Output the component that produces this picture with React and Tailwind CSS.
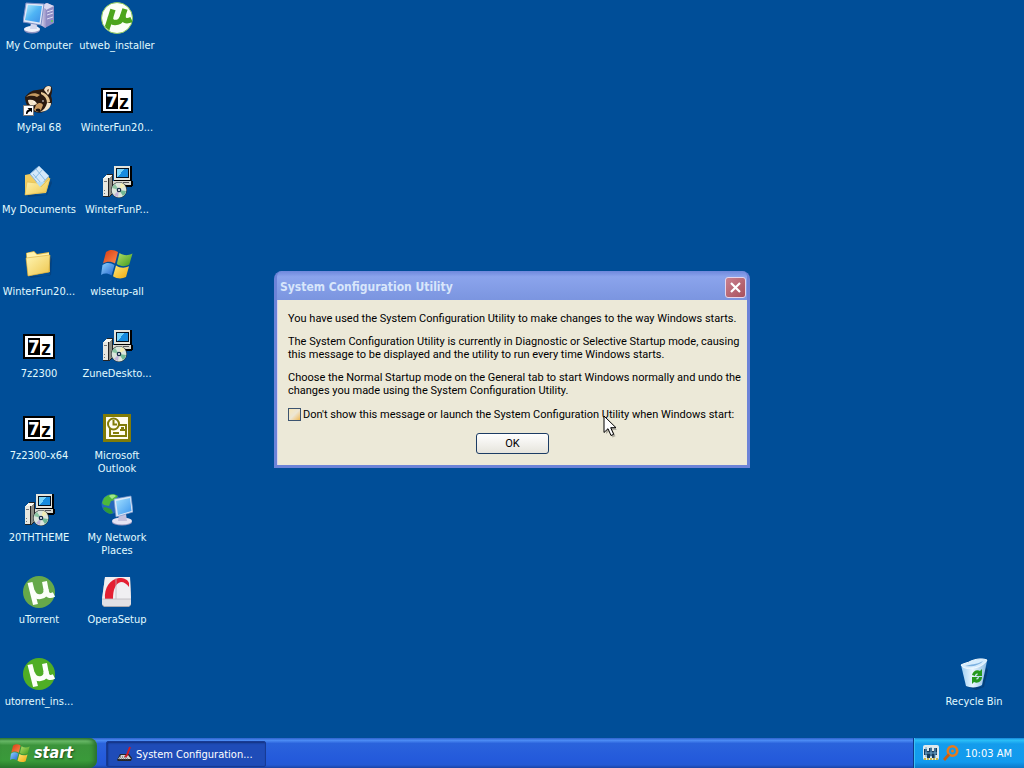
import React from 'react';

function Icon({ children, size = 32 }) {
  return (
    <svg width={size} height={size} viewBox="0 0 32 32" aria-hidden="true" className="shrink-0">
      {children}
    </svg>
  );
}

function ComputerIcon() {
  return (
    <Icon>
      <defs>
        <linearGradient id="pcScreen" x1="0" y1="0" x2="1" y2="1">
          <stop offset="0" stopColor="#a9ecff" />
          <stop offset="0.5" stopColor="#4fb4f4" />
          <stop offset="1" stopColor="#3c8ee6" />
        </linearGradient>
        <linearGradient id="pcCase" x1="0" y1="0" x2="1" y2="0">
          <stop offset="0" stopColor="#f3f1fb" />
          <stop offset="1" stopColor="#9a94c8" />
        </linearGradient>
      </defs>
      <path d="M16 4 24 1l7 3v17l-9 5-6-4z" fill="#8f8cc4" />
      <path d="M16 4 24 1l7 3-8 4z" fill="#d9d8f0" />
      <path d="M16 4l7 3v19l-7-4z" fill="url(#pcCase)" />
      <path d="M24 10l6-2M24 13l6-2M24 17l6-2" stroke="#dcdcf4" />
      <circle cx="29" cy="19" r="1" fill="#5cd04a" />
      <path d="M8 22l6 1 1 4H7z" fill="#aeb4d8" />
      <ellipse cx="9" cy="28" rx="8" ry="3.4" fill="#8f93c0" />
      <ellipse cx="9" cy="27" rx="8" ry="3" fill="#eef0fa" />
      <path d="M8 21h5l1 6H7z" fill="#d4d8ee" />
      <path d="M3 1l18 1-3 21L0 20z" fill="#dfe7f7" stroke="#7f90c6" />
      <path d="M5 3l14 1-2.500 16.500L2 18z" fill="url(#pcScreen)" />
    </Icon>
  );
}

function TorrentWhiteIcon() {
  return (
    <Icon>
      <circle cx="16" cy="16" r="15.500" fill="#fbfff6" stroke="#8cc65c" />
      <g fill="none" stroke="#4ca51c" strokeWidth="5.400">
        <path d="M12 7.500L6.500 25" />
        <path d="M9.500 15c-1 7.500 9 7 11.500 1L24 7" />
        <path d="M22 13c-.5 5.500 3 7 8.500 4.500" />
      </g>
      <path d="M4.500 23l5 0-1 5.500-4-3z" fill="#4ca51c" />
    </Icon>
  );
}

function TorrentGreenIcon({ pale }) {
  return (
    <Icon>
      <circle cx="16" cy="16" r="16" fill={pale ? '#66a94a' : '#4fae26'} />
      <g fill="none" stroke="#fcfffa" strokeWidth="5">
        <path d="M7 6.500L12.500 28.500" />
        <path d="M9.500 15C12 23.500 24 22 23 13.500L21.500 5.500" />
        <path d="M23 13.500C24 20 27 20.500 31 18.500" />
      </g>
    </Icon>
  );
}

function SevenZipIcon() {
  return (
    <Icon>
      <rect x="0" y="4" width="32" height="25" fill="#000" />
      <rect x="2" y="6" width="28" height="21" fill="#fff" />
      <rect x="5" y="8" width="12" height="17" fill="#000" />
      <text x="5" y="23" fontSize="17" fontWeight="700" fill="#fff" fontFamily="DejaVu Sans, sans-serif">7</text>
      <text x="18" y="25" fontSize="20" fontWeight="700" fill="#000" fontFamily="Liberation Sans, sans-serif">z</text>
    </Icon>
  );
}

function RaccoonIcon() {
  return (
    <Icon>
      <path d="M2 13c3-4 7-7 12-7 2 0 4-1 6-1 2-3 5-4 8-3 2 3 1 7 0 10 2 5 1 9-2 12-4 4-9 6-14 4C6 26 2 20 2 13z" fill="#2a1a10" />
      <path d="M21 6c1-4 5-5 7-3 0 3-1 6-3 8z" fill="#f4e2c8" />
      <path d="M24 6l2-1-1 4z" fill="#5a3a20" />
      <path d="M3 13c4-4 9-5 14-2l-3 2c-4-2-8-1-11 0z" fill="#c49a62" />
      <path d="M18 8c5 1 9 5 9 10l-3 1c0-4-2-7-6-9z" fill="#e6c694" />
      <path d="M5 16c5-1 8 1 9 4l-5 2c-3-1-4-4-4-6zM24 19h4c0 4-3 7-6 8l-5 1c4-2 6-5 7-9z" fill="#f4e6cc" />
      <path d="M13 21c3-3 6-2 7 0l-2 5-4 2-3-2z" fill="#c99b62" />
      <ellipse cx="15" cy="26" rx="2.400" ry="1.500" fill="#17100c" />
      <circle cx="11" cy="18" r=".8" fill="#fff" />
      <circle cx="20" cy="17" r=".8" fill="#fff" />
      <rect x="0.500" y="21.500" width="10" height="10" fill="#fff" stroke="#777" />
      <path d="M3 30c0-3 1-4 3-4.500L4.500 24H9v4.500L7.500 27C5 28 4.500 29 4.500 30z" fill="#000" />
    </Icon>
  );
}

function FolderShape({ open }) {
  return (
    <>
      <defs>
        <linearGradient id="folderFront" x1="0" y1="0" x2="1" y2="1">
          <stop offset="0" stopColor="#fff6b4" />
          <stop offset="1" stopColor="#eec64e" />
        </linearGradient>
      </defs>
      {open ? (
        <>
          <path d="M5 29h18l5-15 1 3-5 12-19 2z" fill="#063a72" opacity=".6" />
          <path d="M2 9l5-1 3 3 15-1 2 3-4 14-21 2z" fill="#f0cc60" />
          <path d="M7 8l9-8 10 10-9 10z" fill="#d4e8fa" stroke="#88b4dc" />
          <path d="M13 3l9 11M10 8l8 9M20 3l-8 9" stroke="#88bce6" />
          <path d="M2 29L4 16l10 1 4 4 9-9-4 14z" fill="url(#folderFront)" stroke="#e0b848" strokeWidth=".6" />
          <path d="M13 16l4 5 5-5z" fill="#b5dcf5" />
        </>
      ) : (
        <>
          <path d="M6 28h21V8l2 3-1 16-20 3z" fill="#063a72" opacity=".6" />
          <path d="M3 5l8-2 3 3 12-2 1 20-22 4z" fill="#e4bb48" />
          <path d="M4 5l7-1 3 3 12-2v3L4 11z" fill="#fff3ae" />
          <path d="M3 10l24-3-1 17-21 4z" fill="url(#folderFront)" stroke="#d7aa38" strokeWidth=".6" />
        </>
      )}
    </>
  );
}

function SetupIcon() {
  return (
    <Icon>
      <g shapeRendering="crispEdges">
        <path d="M9 15h23v4l-2 2H9z" fill="#000" />
        <rect x="10" y="15" width="20" height="4" fill="#d8d8d0" />
        <rect x="22" y="16" width="6" height="1" fill="#555" />
        <path d="M13 0h17l1 1v14H13z" fill="#000" />
        <rect x="13" y="0" width="16" height="14" fill="#e4e4dc" />
        <rect x="15" y="2" width="13" height="10" fill="#05111f" />
        <rect x="16" y="3" width="11" height="8" fill="#178ce0" />
        <path d="M16 3h7l-6 8h-1z" fill="#78d4fa" />
        <path d="M2 12l4-4h6v19l-4 4H2z" fill="#222" />
        <path d="M2 12l3-3h6l-3 3z" fill="#f8f8f0" />
        <rect x="2" y="12" width="5" height="18" fill="#e8e8e0" />
        <path d="M8 12l3-3v18l-3 3z" fill="#8c8c84" />
        <path d="M3 15h3M3 24h1M3 27h1" stroke="#777" />
      </g>
      <circle cx="18" cy="24" r="8" fill="#30383c" />
      <circle cx="18" cy="24" r="7.400" fill="#dce6dc" />
      <path d="M18 24l-7-2a7 7 0 0 1 3-4z" fill="#8ac4a2" />
      <path d="M18 24l2-7a7 7 0 0 1 4 3z" fill="#f2ecb4" />
      <path d="M18 24l7 1a7 7 0 0 1-3 5z" fill="#72b894" />
      <path d="M18 24l-1 7a7 7 0 0 1-4-2z" fill="#c4b4d6" />
      <circle cx="18" cy="24" r="2.300" fill="#172c48" />
      <circle cx="18" cy="24" r="1" fill="#fff" />
    </Icon>
  );
}

function FlagIcon({ size = 32 }) {
  return (
    <Icon size={size}>
      <defs>
        <linearGradient id="fr" x1="0" y1="0" x2="1" y2="1"><stop offset="0" stopColor="#d43b14" /><stop offset="1" stopColor="#ff8a4a" /></linearGradient>
        <linearGradient id="fg" x1="0" y1="0" x2="1" y2="1"><stop offset="0" stopColor="#b4e06a" /><stop offset="1" stopColor="#3f9a1c" /></linearGradient>
        <linearGradient id="fb" x1="0" y1="0" x2="1" y2="1"><stop offset="0" stopColor="#8fd4ff" /><stop offset="1" stopColor="#2464cc" /></linearGradient>
        <linearGradient id="fy" x1="0" y1="0" x2="1" y2="1"><stop offset="0" stopColor="#ffe878" /><stop offset="1" stopColor="#f0a80c" /></linearGradient>
      </defs>
      <path d="M5 4c4-3 8-2.500 12 0l-3 11.500c-4-2.500-8-2.500-12 0z" fill="url(#fr)" />
      <path d="M18.500 5c4 2.500 8 3 13 .5l-3.200 11c-4.500 2.500-8.500 2-12.500-.5z" fill="url(#fg)" />
      <path d="M1.500 17c4-3 8-2.500 12 0l-3 10.500c-4-2.500-7-2.500-10.500-.5z" fill="url(#fb)" />
      <path d="M15 17.500c4 2.500 8.500 3 13 .8L25 29c-4.500 2.300-9 1.800-13-.8z" fill="url(#fy)" />
    </Icon>
  );
}

function OutlookIcon() {
  return (
    <Icon>
      <rect x="2" y="2" width="28" height="28" fill="#807c08" />
      <rect x="5" y="5" width="22" height="22" fill="#fffdf0" />
      <g fill="none" stroke="#807c08" strokeWidth="2">
        <path d="M9 16v8h16V13h-7" />
        <path d="M19 18h5" />
        <circle cx="12.500" cy="12" r="5.500" fill="#fffdf0" />
        <path d="M12.500 8v4.500H16" />
        <path d="M12 21h6" />
      </g>
      <rect x="20" y="15" width="3" height="3" fill="#807c08" />
    </Icon>
  );
}

function NetworkIcon() {
  return (
    <Icon>
      <defs>
        <linearGradient id="netScreen" x1="0" y1="0" x2="1" y2="1">
          <stop offset="0" stopColor="#a2e0ff" />
          <stop offset="1" stopColor="#3d96ee" />
        </linearGradient>
      </defs>
      <circle cx="10.500" cy="10" r="10" fill="#2468bc" />
      <path d="M3 4c4-4 10-5 14-2l-3 4-4 1-2 5-5-1-2-2z" fill="#4db83c" />
      <path d="M4 13l6 2 2 4-3 1c-3-1-6-3-7-6z" fill="#2f9a37" />
      <path d="M8 2c3-2 6-1 7 0l-4 3z" fill="#a0e68a" />
      <ellipse cx="21" cy="28" rx="10" ry="3.600" fill="#9694bd" />
      <ellipse cx="21" cy="27" rx="10" ry="3.400" fill="#e5e3f3" />
      <path d="M18 20h7l1 7h-9z" fill="#c5c2de" />
      <path d="M13 5l17-3 2 16-17 5z" fill="#dbe9f8" stroke="#7894c8" strokeWidth=".7" />
      <path d="M15 7l14-3 1.500 13L17 21z" fill="url(#netScreen)" />
    </Icon>
  );
}

function OperaIcon() {
  return (
    <Icon>
      <path d="M4 1h25l1 20v8l-2 2H3l-2-2v-6z" fill="#aaa9b0" />
      <path d="M4 1h25l1 22H1z" fill="#f0eff2" />
      <path d="M1 23h29v5l-2 2H3l-2-2z" fill="#e2e1e5" />
      <path d="M4 23c-1-11 5-20 14-21 6 0 9 2 10 5v4c-2-3-5-5-8-5-6 1-8 9-8 17z" fill="#e41f32" />
      <path d="M15 2v21M1 23h29" stroke="#bbb8bd" strokeWidth=".8" />
    </Icon>
  );
}

function RecycleIcon() {
  return (
    <Icon>
      <defs>
        <linearGradient id="bin" x1="0" y1="0" x2="1" y2="0">
          <stop offset="0" stopColor="#9ccdf2" />
          <stop offset="0.450" stopColor="#e9f6ff" />
          <stop offset="1" stopColor="#8abbe2" />
        </linearGradient>
      </defs>
      <path d="M8 28l16 1 4-20 2 3-4 17-8 3z" fill="#06315f" opacity=".5" />
      <path d="M3 7l26-4-5 24c-4 3-12 3-16 1z" fill="url(#bin)" />
      <path d="M3 7c3-2 7-2 10-4 5-2 11-3 16-1-2 4-8 8-15 8C9 11 5 10 3 7z" fill="#d5ecfd" stroke="#f2faff" />
      <path d="M7 8c6-2 11-1 18-5-3 4-10 6-18 5z" fill="#7db1e0" />
      <g fill="#25991f">
        <path d="M14 17c1-4 5-6 8-4l2-2v7h-6l2-2c-1-1-3 0-3 2z" />
        <path d="M24 19c0 4-4 7-8 5l-2 2v-7h6l-2 2c1 1 3 0 3-2z" />
      </g>
    </Icon>
  );
}

const icons = {
  computer: <ComputerIcon />,
  torrentWhite: <TorrentWhiteIcon />,
  torrent: <TorrentGreenIcon />,
  torrentPale: <TorrentGreenIcon pale />,
  sevenZip: <SevenZipIcon />,
  raccoon: <RaccoonIcon />,
  documents: <Icon><FolderShape open /></Icon>,
  folder: <Icon><FolderShape /></Icon>,
  setup: <SetupIcon />,
  flag: <FlagIcon />,
  outlook: <OutlookIcon />,
  network: <NetworkIcon />,
  opera: <OperaIcon />,
  recycle: <RecycleIcon />,
};

const shortcuts = [
  ['computer', 'My Computer'],
  ['raccoon', 'MyPal 68'],
  ['documents', 'My Documents'],
  ['folder', 'WinterFun20...'],
  ['sevenZip', '7z2300'],
  ['sevenZip', '7z2300-x64'],
  ['setup', '20THTHEME'],
  ['torrentPale', 'uTorrent'],
  ['torrent', 'utorrent_ins...'],
  ['torrentWhite', 'utweb_installer'],
  ['sevenZip', 'WinterFun20...'],
  ['setup', 'WinterFunP...'],
  ['flag', 'wlsetup-all'],
  ['setup', 'ZuneDeskto...'],
  ['outlook', 'Microsoft Outlook'],
  ['network', 'My Network Places'],
  ['opera', 'OperaSetup'],
];

function Shortcut({ icon, label }) {
  return (
    <button type="button" className="flex h-[82px] w-[78px] flex-col items-center gap-[5px] pt-0.5 text-[#e2fbff]">
      {icons[icon]}
      <span className="max-w-[76px] text-center">{label}</span>
    </button>
  );
}

function Dialog() {
  return (
    <section
      role="dialog"
      aria-labelledby="dialog-title"
      className="relative w-[476px] rounded-t-lg border-x-3 border-b-3 border-[#6c83d8] bg-[#7f97e3]"
    >
      <header className="flex h-[29px] items-center justify-between rounded-t-md bg-linear-to-b from-[#6f88dc] via-[#8ba4ec] via-20% to-[#7b95e0] pt-1 pl-[3px] pr-px">
        <h1 id="dialog-title" className="text-[12px] font-bold text-[#d8e6fb]">System Configuration Utility</h1>
        <button
          type="button"
          aria-label="Close"
          className="flex size-[21px] items-center justify-center rounded-[3px] border border-[#e6d5ea] bg-linear-to-br from-[#c98190] to-[#a8505c]"
        >
          <svg width="13" height="13" viewBox="0 0 13 13" aria-hidden="true">
            <path d="M2 2l9 9M11 2l-9 9" stroke="#fff" strokeWidth="2.200" />
          </svg>
        </button>
      </header>
      <div className="flex flex-col gap-2.5 border-l border-[#dcd4ee] bg-[#ece9d8] px-2.5 pt-3 pb-[11px] font-['Roboto','DejaVu_Sans_Condensed',sans-serif] whitespace-nowrap text-black">
        <p>You have used the System Configuration Utility to make changes to the way Windows starts.</p>
        <p>
          The System Configuration Utility is currently in Diagnostic or Selective Startup mode, causing<br />
          this message to be displayed and the utility to run every time Windows starts.
        </p>
        <p>
          Choose the Normal Startup mode on the General tab to start Windows normally and undo the<br />
          changes you made using the System Configuration Utility.
        </p>
        <div className="flex items-center gap-0.5 pt-px">
          <input
            id="hide-message"
            type="checkbox"
            className="size-[13px] shrink-0 appearance-none border border-[#3c5470] bg-linear-to-br from-[#f8e6b4] via-[#ece6d4] to-[#f0b848] checked:bg-[#21a121]"
          />
          <label htmlFor="hide-message">
            Don't show this message or launch the System Configuration Utility when Windows start:
          </label>
        </div>
        <button
          type="button"
          className="mt-0.5 h-[21px] w-[73px] self-center rounded-[3px] border border-[#1c3c64] bg-linear-to-b from-white to-[#e6e4dc]"
        >
          OK
        </button>
      </div>
      <svg width="16" height="24" viewBox="0 0 16 24" aria-hidden="true" className="absolute top-[144px] left-[326px]">
        <path d="M3 3v16l3.500-3 3 6.500 3-1.200-3-6.300H14z" fill="#000" opacity=".25" />
        <path d="M1 1v16.500l4-3.800 3 6.800 2.700-1.200-3-6.600H13z" fill="#fff" stroke="#000" />
      </svg>
    </section>
  );
}

function Taskbar() {
  return (
    <footer className="flex h-[30px] items-stretch bg-[linear-gradient(180deg,#2d62cc_0%,#4c8cf4_8%,#2a63dc_18%,#245adb_70%,#2459d4_90%,#1b43a4_100%)] text-white">
      <button
        type="button"
        className="flex w-[97px] items-center gap-1 rounded-r-lg bg-[linear-gradient(180deg,#2f7a33_0%,#6cbc6a_10%,#3b943b_24%,#3a9a3a_75%,#2a7a2c_100%)] pl-2.5 shadow-[inset_-3px_0_4px_#2a7030]"
      >
        <FlagIcon size={20} />
        <span className="text-[16px] leading-5 font-bold italic [text-shadow:1px_1px_2px_#1c4a1c]">start</span>
      </button>
      <div className="flex min-w-0 flex-1 items-center pt-0.5 pl-[9px]">
        <button
          type="button"
          className="flex h-[26px] w-[160px] items-center gap-[3px] rounded-xs border border-[#173a94] bg-[#1f4cb8] pl-2.5 shadow-[inset_1px_1px_2px_#12307c]"
        >
          <svg width="16" height="16" viewBox="0 0 16 16" aria-hidden="true" className="shrink-0">
            <path d="M0 14l3-6h9l3 4-1 3H1z" fill="#252528" />
            <path d="M1 13l3-4h7l3 4z" fill="#d4d4d4" />
            <path d="M3 11h8M2 13h10" stroke="#555" strokeDasharray="1 1" />
            <path d="M13 1l-3 8-2 2" stroke="#d01c28" strokeWidth="2" fill="none" />
          </svg>
          <span className="truncate">System Configuration...</span>
        </button>
      </div>
      <div className="flex w-[111px] items-center gap-0.5 border-l border-[#0d3a88] bg-[linear-gradient(180deg,#1583d8_0%,#2cc0f8_7%,#149cec_20%,#129aee_80%,#0d78c8_100%)] pl-[9px] shadow-[inset_1px_0_0_#3cc0f4]">
        <svg width="16" height="16" viewBox="0 0 16 16" aria-hidden="true" className="shrink-0">
          <rect width="16" height="15" rx="2" fill="#dfe9ec" />
          <path d="M1 4h3v2h2V3h3v3h2V3h3v7h-2v3H9v-2H7v2H4v-3H1z" fill="#163a5c" />
          <path d="M2 8h12M3 2v10M8 2v10M12 3v10" stroke="#6aa6cc" />
          <path d="M1 14h14" stroke="#c8b94c" strokeWidth="2" strokeDasharray="2 1" />
        </svg>
        <svg width="16" height="16" viewBox="0 0 16 16" aria-hidden="true" className="ml-0.5 shrink-0">
          <circle cx="9.500" cy="6" r="4.700" fill="none" stroke="#e87a1c" strokeWidth="2.600" />
          <path d="M6 9.500L1 15" stroke="#c85e10" strokeWidth="2.800" />
          <circle cx="9.500" cy="6" r="1.500" fill="#e87a1c" />
        </svg>
        <time className="ml-1 whitespace-nowrap">10:03 AM</time>
      </div>
    </footer>
  );
}

export default function App() {
  return (
    <div className="flex min-h-screen flex-col bg-[#004e98] font-['DejaVu_Sans_Condensed','Noto_Sans',sans-serif] text-[11px] leading-[13px]">
      <main className="grid flex-1">
        <div className="col-start-1 row-start-1 flex items-start justify-between">
          <nav aria-label="Desktop" className="grid grid-flow-col grid-rows-9">
            {shortcuts.map(([icon, label], i) => (
              <Shortcut key={i} icon={icon} label={label} />
            ))}
          </nav>
          <div className="self-end pr-[11px]">
            <Shortcut icon="recycle" label="Recycle Bin" />
          </div>
        </div>
        <div className="pointer-events-none col-start-1 row-start-1 grid place-items-center *:pointer-events-auto">
          <Dialog />
        </div>
      </main>
      <Taskbar />
    </div>
  );
}
